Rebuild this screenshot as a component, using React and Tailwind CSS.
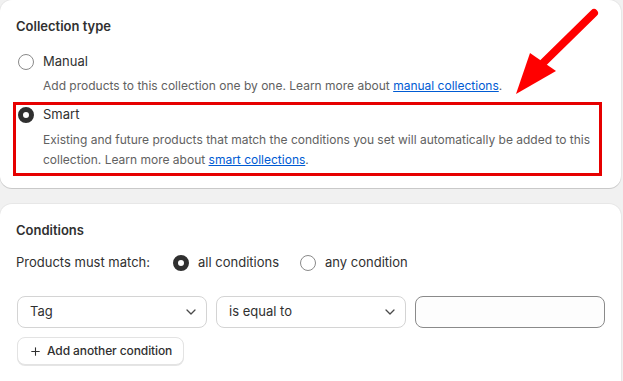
import { Plus } from 'lucide-react';

function Radio({ checked }) {
  return checked ? (
    <span className="box-border block w-4 h-4 rounded-full border-[5px] border-[#303030] bg-white shrink-0" />
  ) : (
    <span className="box-border block w-4 h-4 rounded-full border border-[#8a8a8a] bg-white shrink-0" />
  );
}

function Select({ label }) {
  return (
    <div className="flex items-center justify-between w-[191px] h-[32px] pl-3 pr-[10px] rounded-lg border border-[#d4d4d4] bg-white text-[13px] text-[#303030]">
      <span>{label}</span>
      <svg width="10" height="6" viewBox="0 0 10 6" fill="none">
        <path d="M1 1l4 4 4-4" stroke="#4a4a4a" strokeWidth="1.3" strokeLinecap="round" strokeLinejoin="round" />
      </svg>
    </div>
  );
}

export default function App() {
  return (
    <div className="relative w-[623px] h-[381px] overflow-hidden bg-[#f1f1f1] text-[#303030] font-['Inter','Noto_Sans',sans-serif]">
      <div className="relative w-[621px] h-[188px] bg-white rounded-xl shadow-[0_1px_0_rgba(0,0,0,0.13),0_0_0_1px_rgba(0,0,0,0.04)] px-4 pt-4">
        <h2 className="text-[13px] leading-5 font-semibold">Collection type</h2>
        <div className="mt-4 flex items-center gap-[9px] h-5 pl-[2px]">
          <Radio />
          <span className="text-[13px]">Manual</span>
        </div>
        <p className="mt-1 pl-[27px] text-[12px] leading-5 text-[#616161]">
          Add products to this collection one by one. Learn more about{' '}
          <a className="text-[#005bd3] underline">manual collections</a>.
        </p>
        <div className="mt-[9px] flex items-center gap-[9px] h-5 pl-[2px]">
          <Radio checked />
          <span className="text-[13px]">Smart</span>
        </div>
        <p className="mt-[5px] pl-[27px] pr-3 text-[12px] leading-5 text-[#616161]">
          Existing and future products that match the conditions you set will automatically be added to this
          collection. Learn more about <a className="text-[#005bd3] underline">smart collections</a>.
        </p>
        <div className="absolute left-[13px] top-[102px] w-[589px] h-[74px] border-[3px] border-[#e60000]" />
      </div>

      <div className="mt-4 w-[621px] h-[200px] bg-white rounded-xl shadow-[0_1px_0_rgba(0,0,0,0.13),0_0_0_1px_rgba(0,0,0,0.04)] px-4 pt-4">
        <h2 className="text-[13px] leading-5 font-semibold">Conditions</h2>
        <div className="mt-[13px] flex items-center h-5 text-[13px]">
          <span className="mr-[23px]">Products must match:</span>
          <Radio checked />
          <span className="ml-[9px] mr-[21px]">all conditions</span>
          <Radio />
          <span className="ml-[9px]">any condition</span>
        </div>
        <div className="mt-[23px] flex gap-[9px] pl-px">
          <Select label="Tag" />
          <Select label="is equal to" />
          <div className="w-[191px] h-[32px] rounded-lg border border-[#8a8a8a] bg-[#fdfdfd]" />
        </div>
        <button className="mt-[9px] ml-px flex items-center gap-[5px] h-[28px] pl-[11px] pr-[11px] rounded-lg border border-[#e3e3e3] bg-white shadow-[0_1px_0_rgba(0,0,0,0.1)] text-[12px] font-medium tracking-[-0.1px] text-[#303030]">
          <Plus size={13} strokeWidth={2} />
          Add another condition
        </button>
      </div>

      <svg className="absolute left-0 top-0 pointer-events-none" width="623" height="381">
        <line x1="594" y1="13" x2="543" y2="63" stroke="#ff0000" strokeWidth="8" strokeLinecap="round" />
        <polygon points="516,94 530,53 556,71" fill="#ff0000" />
      </svg>
    </div>
  );
}
